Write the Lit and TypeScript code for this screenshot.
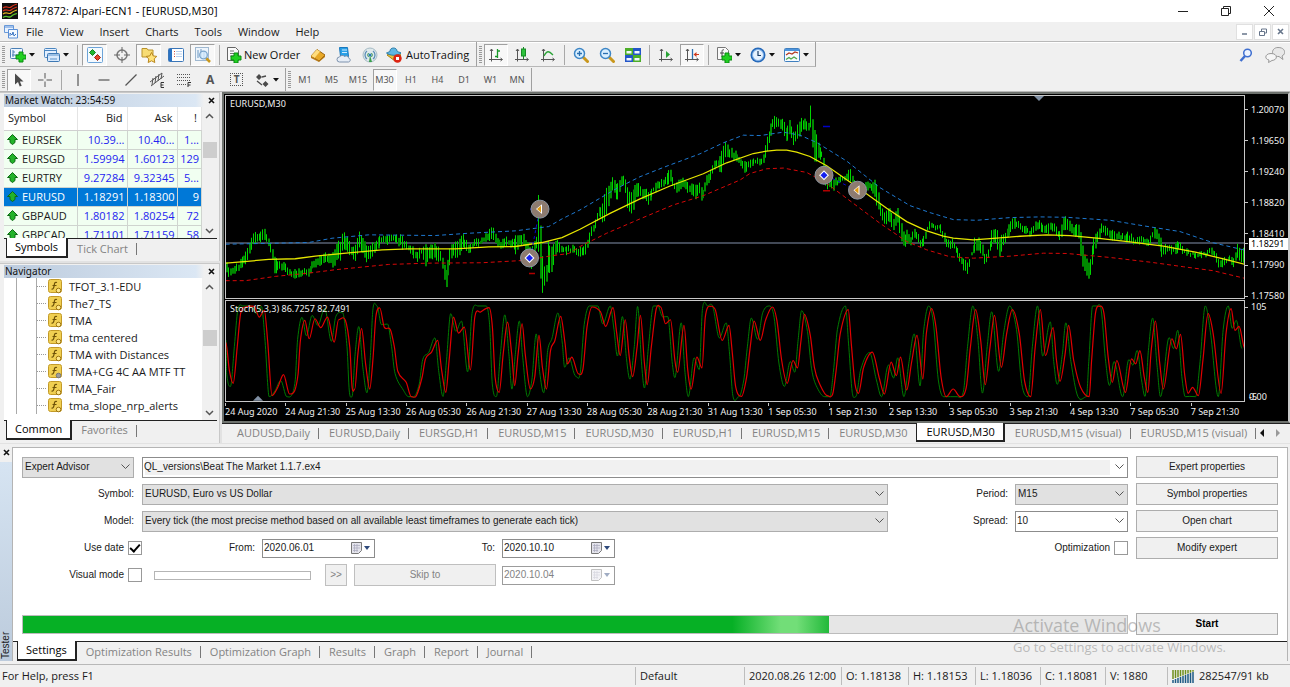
import { LitElement, html, svg, css, nothing } from "lit";
import { customElement } from "lit/decorators.js";
import { classMap } from "lit/directives/class-map.js";
import { styleMap } from "lit/directives/style-map.js";

type Pt = [number, number];
type Range = [number, number, number];

const shared = css`
  :host {
    --face: #f0f0f0;
    --ui: "Open Sans", "Noto Sans", sans-serif;
    --dialog: "Liberation Sans", Arial, sans-serif;
    --small: "Noto Sans", "Open Sans", sans-serif;
    font-family: var(--ui);
    font-size: 11px;
    line-height: 16px;
    color: #1a1a1a;
  }
  * { box-sizing: border-box; }
  button, input, select { font: inherit; color: inherit; margin: 0; border-radius: 0; }
  button { padding: 0; background: none; border: 0; white-space: nowrap; }
  svg { display: block; flex: none; }
`;

const tabStyles = css`
  .tabs { display: flex; align-items: stretch; flex: none; height: 20px; padding-left: 2px; background: var(--face); border-top: 1px solid #222; }
  .tab { display: flex; align-items: center; padding: 0 9px; color: #838383; position: relative; white-space: nowrap; }
  .tab:not(.on)::after { content: ""; position: absolute; right: 0; top: 4px; bottom: 3px; width: 1px; background: #777; }
  .tab.on { color: #000; background: #fff; border: solid #222; border-width: 0 2px 2px 1px; margin-top: -1px; padding: 0 8px; }
  .tab.before::after { display: none; }
`;

/* ---------- icons ---------- */

const plus = (x: number, y: number) => svg`<path d="M${x + 3} ${y}h4v3h3v4h-3v3h-4v-3h-3v-4h3z" fill="#21d021" stroke="#0b8a12" stroke-width="1"/>`;
const axes = svg`<path d="M3.500 2v12.500M1 12.500h13M2 4l1.500-2L5 4M12.500 11l2 1.500-2 1.500" fill="none" stroke="#555"/>`;
const lens = svg`<path d="M10 10l4.500 4.500" stroke="#c9971c" stroke-width="3" stroke-linecap="round"/><circle cx="6.500" cy="6.500" r="5" fill="#d9efff" stroke="#3d86c6" stroke-width="1.500"/>`;

const icons: Record<string, unknown> = {
  newChart: svg`<rect x=".5" y="1.500" width="12" height="10" rx="1" fill="#eef6ff" stroke="#4a7fb5"/><path d="M3 3v7M2 8h8M3 5h2" stroke="#4a7fb5" fill="none"/>${plus(6, 5)}`,
  profiles: svg`<rect x=".5" y="1.500" width="12" height="9" rx="1" fill="#e4f0ff" stroke="#4b86c0"/><path d="M1 3.500h11" stroke="#4b86c0"/><rect x="3.500" y="6.500" width="12" height="8" rx="1" fill="#d8e9fc" stroke="#3d78b4"/><path d="M4 8h11M6 12h7" stroke="#5b93cb"/>`,
  market: svg`<rect x=".5" y=".5" width="15" height="15" rx="1" fill="#f4faff" stroke="#6da4d8"/><path d="M5.500 2.500l3 3-3 3-3-3z" fill="#22b832" stroke="#168021"/><path d="M10.500 7.500l3 3-3 3-3-3z" fill="#e4452b" stroke="#9e2010"/>`,
  target: svg`<circle cx="8" cy="8" r="5" fill="none" stroke="#777" stroke-width="1.500"/><path d="M8 0v6M8 10v6M0 8h6M10 8h6" stroke="#666"/>`,
  navigator: svg`<path d="M1 3V1.500h5L7 3h5v7H1z" fill="#f7dc74" stroke="#b8912a"/><path d="M10.500 5.500l1.700 3.400 3.600.5-2.600 2.500.6 3.600-3.300-1.700L7.200 15.500l.6-3.600-2.600-2.500 3.600-.5z" fill="#ffe27a" stroke="#b8861c"/>`,
  terminal: svg`<rect x=".5" y="1.500" width="15" height="13" rx="1" fill="#fff" stroke="#3a76b8"/><rect x="1" y="2" width="3" height="12" fill="#2a72c4"/><path d="M6 4.500h1M6 7h1M6 9.500h1" stroke="#c43"/><path d="M8 4.500h6M8 7h6M8 9.500h6" stroke="#b8d0ee"/>`,
  tester: svg`<rect x=".5" y=".5" width="13" height="13" fill="#eef5fc" stroke="#9fb8d0"/><path d="M3 3v8M6 2v8M9 4v7" stroke="#6b97c2"/><path d="M11 11l4 4" stroke="#c9971c" stroke-width="2.500"/><circle cx="8.500" cy="8" r="3.800" fill="#d6ebfc" fill-opacity=".8" stroke="#7ba6cc" stroke-width="1.300"/>`,
  order: svg`<path d="M1.500 .5h8l3 3v10h-11z" fill="#fafafa" stroke="#666"/><path d="M4 4h4M4 6.500h6M4 9h4" stroke="#777"/>${plus(5, 6)}`,
  gold: svg`<path d="M1 9l6-6.500 8 5.500-6 6z" fill="#e8a927" stroke="#9a6410"/><path d="M1 9l6-6.500 3 2L4.500 11z" fill="#ffdd7d"/><path d="M1 9l8 5 6-6v2l-6 5-8-4z" fill="#b87a14"/>`,
  cloud: svg`<path d="M3.500 .5h8l1 9h-8z" fill="#28a0e8" stroke="#1978bd"/><path d="M6 3h5M6 5.500h5" stroke="#cdeaff"/><path d="M3.500 15a2.500 2.500 0 010-5c1-2 4-2 5-.5 2-1.500 4 0 4 1.500 2.500.5 2 4 0 4z" fill="#e6edf6" stroke="#7c91ad"/>`,
  radio: svg`<circle cx="8" cy="8" r="7" fill="#dfe9ec" stroke="#a5bac4"/><path d="M5 12a5 5 0 010-8M11 4a5 5 0 010 8" fill="none" stroke="#5d8fb8" stroke-width="1.300"/><path d="M6.500 10a3 3 0 010-4M9.500 6a3 3 0 010 4" fill="none" stroke="#3f9a55"/><path d="M8 8l-1 7h3z" fill="#39a04a"/><circle cx="8" cy="8" r="1.500" fill="#2a7ab8"/>`,
  auto: svg`<path d="M1 8c3-2 11-2 14 0l-6 6z" fill="#e9c03c" stroke="#a9820f"/><path d="M.5 6C2 5 4 5 4 4c0-4 7-4 7 0 0 1 3 1 4 2-3 3-11 3-14.500 0z" fill="#5fb6e2" stroke="#2c7ca8"/><circle cx="11.500" cy="11.500" r="4.200" fill="#dd2412"/><rect x="10" y="10" width="3" height="3" fill="#fff"/>`,
  bars: svg`${axes}<path d="M9.500 2v9M9.500 4h2.500M7 9.500h2.500" stroke="#1a9a2a" stroke-width="1.300"/>`,
  candles: svg`${axes}<path d="M9.500 0v12" stroke="#178a24"/><rect x="7.500" y="2" width="4" height="7" fill="#2dc23c" stroke="#178a24"/>`,
  line: svg`${axes}<path d="M4 9c3-6 5-5 9-1" fill="none" stroke="#2aa336" stroke-width="1.300"/>`,
  zoomIn: svg`${lens}<path d="M4 6.500h5M6.500 4v5" stroke="#2a6fb0" stroke-width="1.300"/>`,
  zoomOut: svg`${lens}<path d="M4 6.500h5" stroke="#2a6fb0" stroke-width="1.300"/>`,
  tile: svg`<path d="M0 1h8v7H0zM8 8h8v7H8z" fill="#4cae28"/><path d="M8 1h8v7H8zM0 8h8v7H0z" fill="#2356c8"/><path d="M1.500 4h5v2.500h-5zM9.500 4h5v2.500h-5zM1.500 11h5v2.500h-5zM9.500 11h5v2.500h-5z" fill="#f2f7ff"/>`,
  scroll: svg`${axes}<path d="M8 4v7l4-3.500z" fill="#2aa336"/>`,
  shift: svg`${axes}<path d="M8.500 2v10" stroke="#2a6fb0" stroke-width="1.300"/><path d="M9.500 7.500l3-2.500v2H15v1h-2.500v2z" fill="#d0391c"/>`,
  indicators: svg`<path d="M1.500 .5h8l3 3v9h-11z" fill="#fafafa" stroke="#777"/><path d="M8 3c-2-1-2 1-2 3v4M4 6h4" fill="none" stroke="#444"/>${plus(6, 6)}`,
  clock: svg`<circle cx="8" cy="8" r="7.500" fill="#2569ba"/><circle cx="8" cy="8" r="5.500" fill="#e6f2ff" stroke="#80b1e8"/><path d="M8 4v4.500h3" fill="none" stroke="#1a3c66" stroke-width="1.200"/>`,
  template: svg`<rect x=".5" y="1.500" width="15" height="13" rx="1" fill="#f6fbff" stroke="#3f7fbf"/><path d="M1 3h14" stroke="#4d94dc" stroke-width="2"/><path d="M2 8l3-2 3 1 3-2 3 1" fill="none" stroke="#b23a22" stroke-width="1.300"/><path d="M2 12.500l3-2 2 1.500 3-2 3 2" fill="none" stroke="#4fa648" stroke-width="1.300"/>`,
  cursor: svg`<path d="M4 1.500v11l3-2.500 1.700 4.500 2-.8-1.800-4.300h3.600z" fill="#4a4a4a"/>`,
  cross: svg`<path d="M8 1v5.500M8 9.500V15M1 8h5.500M9.500 8H15" stroke="#555"/>`,
  vline: svg`<path d="M8 2v12" stroke="#555" stroke-width="1.200"/>`,
  hline: svg`<path d="M2.500 8h11" stroke="#555" stroke-width="1.200"/>`,
  trend: svg`<path d="M2.500 13.500l11-11" stroke="#555" stroke-width="1.200"/>`,
  channel: svg`<path d="M1 10L13 1M2 14L15 4M4 6l-1 7M7 4l-1 7M10 2L9 9M13 1l-1 6" stroke="#555" fill="none"/><path d="M15 10.500h-3v5h3M12 13h2.500" fill="none" stroke="#333"/>`,
  fibo: svg`<path d="M1 2.500h14M1 5.500h14M1 8.500h14M1 12.500h9" stroke="#555" stroke-dasharray="1 1"/><path d="M15 10.500h-3V15M12 13h2.500" fill="none" stroke="#333"/>`,
  arrows: svg`<path d="M5 2l3 3-3 3-3-3zM11.500 9l3 3-3 3-3-3z" fill="#4a4a4a"/><path d="M8 5l4-1M3 9l5 4" stroke="#4a4a4a" stroke-width="1.300"/>`,
};

const icon = (name: string) => html`<svg width="16" height="16" viewBox="0 0 16 16" aria-hidden="true">${icons[name]}</svg>`;
const caret = html`<svg width="6" height="4" viewBox="0 0 6 4" aria-hidden="true"><path d="M0 0h6L3 3.500z" fill="#111"/></svg>`;
const closeMark = html`<svg width="7" height="7" viewBox="0 0 7 7" aria-hidden="true"><path d="M1 1l5 5M6 1L1 6" stroke="#111" stroke-width="1.600"/></svg>`;

/* ---------- chart data ---------- */

const spread = <T extends number[]>(rows: T[], x0: number, y0: number): T[] =>
  rows.map((r) => r.map((v, i) => (i === 0 ? x0 + v / 3 : y0 + v / 3)) as T);

const quotes: Range[] = [
  ...spread<Range>([[11,515,545],[22,540,555],[40,525,545],[55,505,530],[72,475,510],[88,440,470],[95,420,455],[110,425,450],[121,410,440],[130,420,445],[138,445,465],[148,470,500],[155,500,540],[175,510,535],[190,520,540],[205,540,560],[225,535,555],[245,535,550],[256,535,560],[270,510,530],[285,500,525],[300,490,515],[315,490,510],[333,480,525],[345,450,495],[352,460,510],[360,425,470],[375,440,475],[390,470,500],[400,460,512],[409,422,465],[420,440,485],[435,470,510],[450,460,490],[462,445,470],[480,435,455],[500,435,453],[520,435,450],[535,435,465],[550,450,475],[570,470,490],[585,480,505],[597,470,485],[608,465,520],[620,465,500],[640,460,500],[655,480,510],[670,540,585],[680,480,530],[690,460,490],[705,455,500],[720,432,465],[738,460,485],[750,450,470],[770,445,460],[790,430,450],[810,408,445],[820,440,460],[835,450,465],[850,440,460],[868,450,465],[880,430,485],[890,435,460],[903,432,465],[915,460,510],[926,480,535],[935,450,490],[943,440,470],[947,290,460],[952,360,550],[959,498,607],[970,540,570],[976,450,540],[988,470,540],[1000,445,490],[1010,460,480],[1030,470,485],[1050,465,480]], 222, 92),
  ...spread<Range>([[5,475,495],[15,455,490],[25,435,460],[35,405,430],[45,385,405],[55,345,375],[65,350,385],[75,300,385],[88,275,330],[97,252,290],[110,280,325],[120,265,290],[131,250,270],[140,285,350],[155,310,365],[165,270,320],[178,285,305],[190,290,325],[205,300,335],[220,285,300],[235,270,290],[250,265,285],[269,230,270],[285,280,300],[300,262,290],[315,270,290],[330,280,305],[345,275,320],[355,275,300],[365,300,330],[375,260,290],[390,240,265],[400,208,235],[412,210,225],[422,190,250],[433,148,200],[445,170,195],[460,180,200],[475,195,215],[490,210,238],[505,210,230],[520,205,218],[540,205,215],[550,180,205],[560,130,180],[568,110,145],[575,77,110],[590,80,105],[605,82,110],[620,110,150],[627,77,130],[640,125,155],[655,95,135],[665,80,115],[684,95,120],[690,44,100],[700,110,215],[712,150,195],[725,180,200],[735,220,280],[745,265,290],[760,265,290],[775,262,272],[790,252,270],[808,235,260],[820,265,285],[835,285,310],[850,275,295],[865,275,290],[882,268,305],[892,290,350],[900,340,375],[912,370,400],[925,345,385],[940,380,410],[950,348,385],[960,390,440],[970,430,470],[980,415,455],[990,435,460],[1003,410,435],[1020,445,465],[1030,430,460],[1045,393,410]], 580, 92),
  ...spread<Range>([[5,398,408],[28,398,412],[40,420,450],[50,445,465],[65,445,465],[80,465,490],[95,500,525],[113,515,547],[122,480,495],[135,440,480],[150,445,480],[163,490,517],[172,480,505],[185,415,460],[198,410,450],[207,440,497],[220,425,455],[235,405,430],[250,377,405],[262,390,408],[280,405,420],[300,415,432],[315,392,418],[330,390,415],[345,405,430],[360,400,415],[375,402,420],[387,425,447],[403,374,410],[415,390,415],[430,405,430],[448,400,440],[452,430,520],[463,500,540],[477,520,563],[487,450,505],[500,425,450],[517,396,420],[530,412,430],[540,420,440],[555,420,445],[575,430,445],[595,425,448],[615,440,455],[635,435,450],[655,445,467],[665,420,440],[677,410,435],[695,460,495],[715,460,480],[730,465,485],[745,450,475],[760,470,485],[780,480,490],[800,485,497],[820,485,495],[835,472,488],[850,475,490],[868,510,533],[880,500,515],[900,495,510],[913,500,527],[919,457,490],[930,475,515],[942,472,512]], 930, 92),
];

const middle: Pt[] = [
  ...spread<Pt>([[11,515],[140,504],[220,502],[280,494],[380,484],[480,475],[560,472],[700,472],[800,466],[880,465],[960,453],[1020,438]], 222, 92),
  ...spread<Pt>([[0,413],[90,365],[180,322],[270,283],[370,246],[440,213],[520,185],[560,178],[590,175],[620,175],[650,181],[690,194],[740,222],[830,285],[920,350],[980,390],[1040,418]], 580, 92),
  ...spread<Pt>([[0,421],[40,434],[70,440],[130,445],[200,440],[270,434],[350,430],[420,432],[500,440],[600,451],[700,464],[800,483],[880,502],[945,519]], 930, 92),
];
const upper: Pt[] = [
  ...spread<Pt>([[11,458],[260,453],[330,440],[440,430],[640,432],[740,425],[880,418],[980,405],[1020,382]], 222, 92),
  ...spread<Pt>([[0,355],[110,290],[180,255],[250,227],[360,186],[430,153],[490,130],[540,131],[610,121],[660,130],[710,152],[800,208],[900,288],[990,342]], 580, 92),
  ...spread<Pt>([[0,363],[70,384],[140,386],[240,378],[330,376],[410,377],[540,386],[660,406],[750,420],[850,454],[945,476]], 930, 92),
];
const lower: Pt[] = [
  ...spread<Pt>([[11,568],[70,568],[160,555],[260,545],[340,535],[500,519],[620,515],[780,514],[920,506],[980,494],[1040,486]], 222, 92),
  ...spread<Pt>([[0,465],[80,425],[180,382],[280,340],[370,312],[480,265],[510,245],[560,231],[610,229],[680,242],[740,275],[800,320],[900,395],[980,450],[1040,475]], 580, 92),
  ...spread<Pt>([[0,478],[60,496],[130,500],[240,494],[340,485],[410,486],[540,498],[660,512],[760,526],[850,538],[945,561]], 930, 92),
];

const signalA: Pt[] = [[11,135],[22,220],[33,258],[45,150],[55,50],[70,30],[95,28],[110,60],[125,40],[135,130],[148,295],[165,270],[182,232],[200,290],[215,280],[225,230],[232,130],[245,70],[258,125],[275,65],[292,92],[312,60],[332,135],[345,68],[365,70],[378,150],[385,270],[393,275],[402,170],[413,95],[425,200],[437,275],[447,180],[455,60],[467,33],[480,90],[498,97],[510,150],[520,222],[545,255],[560,298],[575,295],[592,240],[602,185],[620,165],[638,130],[650,220],[662,285],[672,190],[685,60],[700,108],[717,90],[735,218],[748,60],[765,45],[790,32],[800,90],[808,240],[820,285],[832,170],[845,75],[857,170],[866,265],[876,170],[888,80],[897,170],[912,275],[925,240],[938,115],[948,210],[960,275],[972,160],[985,130],[1002,58],[1015,140],[1022,200],[1035,180],[1055,230],[1068,215],[1080,90],[1095,30],[1120,45],[1135,88],[1157,32],[1168,110],[1178,175],[1193,68],[1205,180],[1215,238],[1228,150],[1238,55],[1250,200],[1258,262],[1270,150],[1285,35],[1298,30],[1312,80],[1327,68],[1340,190],[1348,225],[1367,85],[1378,220],[1388,275],[1405,180],[1420,212],[1430,60],[1445,28],[1460,40],[1480,130],[1500,85],[1510,170],[1520,270],[1537,297],[1552,240]];
const signalB: Pt[] = [[0,155],[12,72],[30,130],[45,70],[65,30],[78,70],[92,190],[108,258],[125,190],[138,212],[148,130],[158,52],[175,115],[187,210],[200,255],[225,295],[240,290],[250,220],[262,110],[285,38],[295,150],[305,260],[315,288],[330,210],[355,165],[375,240],[390,290],[410,195],[425,235],[437,180],[455,278],[470,190],[485,115],[502,245],[512,110],[527,35],[540,90],[555,240],[570,298],[590,275],[610,298],[628,270],[640,150],[655,38],[670,130],[683,262],[697,150],[710,55],[730,210],[745,110],[762,38],[782,110],[797,250],[815,298],[828,150],[843,38],[858,175],[880,92],[890,190],[900,252],[915,170],[925,85],[940,190],[960,270],[985,298],[992,190],[1003,50],[1015,28],[1028,50],[1040,180],[1052,255],[1065,190],[1090,285],[1108,185],[1120,200],[1132,160],[1145,240],[1155,285],[1165,160],[1177,72],[1190,200],[1200,275],[1225,125],[1238,155],[1250,112],[1262,230],[1272,288],[1285,270],[1302,295],[1315,190],[1330,50],[1345,110],[1368,288],[1382,110],[1397,35],[1408,100],[1420,88],[1437,155]];
const level = (v: number) => 307 + ((v - 27) * 91) / 271;
const signal: Pt[] = [
  ...signalA.map(([x, v]): Pt => [222 + x * 0.338, level(v)]),
  ...signalB.map(([x, v]): Pt => [750 + x * 0.3444, level(v)]),
];
const main: Pt[] = signal.map(([x, y], i): Pt => {
  const swing = i % 3 === 0 ? 1.25 : 1.1;
  return [Math.max(226, x - 2.8), Math.max(307, Math.min(398, 352 + (y - 352) * swing))];
});

const toPath = (pts: Pt[]) => "M" + pts.map(([x, y]) => `${x.toFixed(1)} ${y.toFixed(1)}`).join("L");

const toCurve = (pts: Pt[]) => {
  let d = `M${pts[0][0].toFixed(1)} ${pts[0][1].toFixed(1)}`;
  const slope = (i: number) => {
    const a = pts[i - 1];
    const b = pts[i];
    const c = pts[i + 1];
    if (!a || !c || (b[1] - a[1]) * (c[1] - b[1]) <= 0) return 0;
    return (c[1] - a[1]) / (c[0] - a[0] || 1);
  };
  for (let i = 1; i < pts.length; i++) {
    const [x0, y0] = pts[i - 1];
    const [x1, y1] = pts[i];
    const h = (x1 - x0) / 3;
    d += `C${(x0 + h).toFixed(1)} ${(y0 + slope(i - 1) * h).toFixed(1)} ${(x1 - h).toFixed(1)} ${(y1 - slope(i) * h).toFixed(1)} ${x1.toFixed(1)} ${y1.toFixed(1)}`;
  }
  return d;
};

const noise = (i: number) => {
  const s = Math.sin(i * 78.233) * 43758.5453;
  return s - Math.floor(s);
};

const buildBars = () => {
  let bright = "";
  let dim = "";
  let k = 0;
  for (let i = 0; i < 540; i++) {
    const x = 226.4 + i * 1.889;
    if (x > 1244.5) break;
    while (k < quotes.length - 2 && quotes[k + 1][0] < x) k++;
    const a = quotes[k];
    const b = quotes[k + 1];
    const t = Math.max(0, Math.min(1, (x - a[0]) / (b[0] - a[0])));
    const top = a[1] + (b[1] - a[1]) * t + (noise(i) - 0.6) * 4;
    const end = a[2] + (b[2] - a[2]) * t + (noise(i + 900) - 0.4) * 4;
    const seg = `M${Math.round(x) + 0.5} ${top.toFixed(1)}V${Math.max(end, top + 3).toFixed(1)}`;
    if (noise(i + 300) > 0.42) bright += seg;
    else dim += seg + `m1 0V${top.toFixed(1)}`;
  }
  return { bright, dim };
};
const bars = buildBars();

const prices: [string, number][] = [["1.20070", 110], ["1.19650", 141], ["1.19240", 172], ["1.18820", 203], ["1.18410", 234], ["1.17990", 266], ["1.17580", 297]];
const times = ["24 Aug 2020", "24 Aug 21:30", "25 Aug 13:30", "26 Aug 05:30", "26 Aug 21:30", "27 Aug 13:30", "28 Aug 05:30", "28 Aug 21:30", "31 Aug 13:30", "1 Sep 05:30", "1 Sep 21:30", "2 Sep 13:30", "3 Sep 05:30", "3 Sep 21:30", "4 Sep 13:30", "7 Sep 05:30", "7 Sep 21:30"];

@customElement("price-chart")
export class PriceChart extends LitElement {
  static styles = [shared, css`
    :host { display: grid; min-height: 0; min-width: 0; background: #000; border: 2px solid #6d716d; border-right-color: #c8c8c8; padding: 1px 0 0 1px;
      grid-template-columns: minmax(0, 1fr) 43px; grid-template-rows: minmax(0, 205fr) minmax(0, 102fr) 18px; row-gap: 1px;
      font-family: var(--small); font-size: 9px; line-height: 12px; color: #f0f0f0; }
    .pane { position: relative; border: 1px solid #c8c8c8; overflow: hidden; min-height: 0; }
    .pane svg { width: 100%; height: 100%; }
    .caption { position: absolute; left: 4px; top: 2px; white-space: nowrap; }
    .axis { position: relative; }
    .mark { position: absolute; left: 0; transform: translateY(-50%); display: flex; align-items: center; }
    .mark::before { content: ""; width: 3px; height: 1px; background: #c8c8c8; margin-right: 1px; }
    .price { padding: 0 2px; }
    .mark.now .price { background: #fff; color: #000; padding-right: 4px; }
    .overlap { position: absolute; left: 2px; bottom: -1px; }
    .times { grid-column: 1 / -1; display: grid; grid-template-columns: repeat(17, minmax(0, 1fr)); padding-right: 37px; white-space: nowrap; }
    .time::before { content: ""; display: block; width: 1px; height: 3px; background: #c8c8c8; }
  `];

  private order(x: number, y: number, buy: boolean) {
    return svg`<g transform="translate(${x} ${y})"><circle r="9" fill="#8d7b70" stroke="#8c96a3" stroke-width="1"/>
      ${buy
        ? svg`<path d="M0 -5l5 5-5 5-5-5z" fill="#fff"/><path d="M0 -3.500l3.500 3.500L0 3.500-3.500 0z" fill="#1420f0"/>`
        : svg`<path d="M2 -5v10L-4 0z" fill="#fff"/><path d="M1 -3.500v7L-3 0z" fill="#e09a10"/>`}</g>`;
  }

  render() {
    return html`
      <div class="pane">
        <svg viewBox="226 96 1018 203" preserveAspectRatio="none" role="img" aria-label="EURUSD M30 price chart">
          <path d="M226 243.500h1019" stroke="#596273" stroke-width="1.500"/>
          <g fill="none">
            <path d=${bars.dim} stroke="#008a00"/>
            <path d=${bars.bright} stroke="#00d400"/>
            <path d=${toPath(upper)} stroke="#1e78d0" stroke-dasharray="4 3"/>
            <path d=${toPath(lower)} stroke="#d80808" stroke-dasharray="4 3"/>
            <path d=${toPath(middle)} stroke="#e6e600" stroke-width="1.300"/>
          </g>
          <path d="M1034 96h10l-5 5z" fill="#8090a4"/>
          <path d="M823 126.500h7M530 209.500h6" stroke="#0000c8" stroke-width="1.500"/>
          <path d="M823 191h7M529 274h6" stroke="#b00000" stroke-width="1.500"/>
          <path d="M539 213L531 255M827 176l28 14" stroke="#0808d0" stroke-dasharray="3 3"/>
          ${this.order(540, 209.5, false)}${this.order(529.5, 258.5, true)}${this.order(824, 175.500, true)}${this.order(857.5, 190.500, false)}
        </svg>
        <span class="caption">EURUSD,M30</span>
      </div>
      <div class="axis">
        ${prices.map(([p, y]) => html`<div class="mark" style=${styleMap({ top: `${((y - 95) / 205) * 100}%` })}><span class="price">${p}</span></div>`)}
        <div class="mark now" style=${styleMap({ top: `${((244 - 95) / 205) * 100}%` })}><span class="price">1.18291</span></div>
      </div>
      <div class="pane">
        <svg viewBox="226 302 1018 100" preserveAspectRatio="none" role="img" aria-label="Stochastic oscillator">
          <path d=${toCurve(main)} fill="none" stroke="#007a00"/>
          <path d=${toCurve(signal)} fill="none" stroke="#e00000" stroke-width="1.200"/>
          <path d="M253 402h10l-5-5z" fill="#8090a4"/>
        </svg>
        <span class="caption">Stoch(5,3,3) 86.7257 82.7491</span>
      </div>
      <div class="axis"><span class="price overlap">0.00</span><span class="price overlap">-5</span><div class="mark" style=${styleMap({ top: "7%" })}><span class="price">105</span></div></div>
      <div class="times">${times.map((t) => html`<span class="time">${t}</span>`)}</div>
    `;
  }
}

/* ---------- strategy tester ---------- */

@customElement("strategy-tester")
export class StrategyTester extends LitElement {
  static styles = [shared, tabStyles, css`
    :host { display: flex; background: var(--face); border-top: 1px solid #e2e2e2; padding: 3px 2px 3px 0; position: relative; }
    .strip { width: 12px; flex: none; display: flex; flex-direction: column; gap: 5px; }
    .close { height: 10px; display: flex; align-items: center; justify-content: center; }
    .title { flex: 1; background: linear-gradient(#bccbdc, #d6e4f2); writing-mode: vertical-rl; transform: rotate(180deg); font-family: var(--dialog); font-size: 10px; line-height: 12px; padding-top: 2px; }
    .body { flex: 1; min-width: 0; background: #fff; border: solid #b4b4b4; border-width: 1px 1px 0 1px; display: flex; flex-direction: column; }
    .tabs { padding-left: 4px; }
    .form { flex: 1; padding: 8px 9px 6px; display: flex; flex-direction: column; gap: 5px; font-family: var(--dialog); font-size: 10px; line-height: 14px; }
    .row { display: grid; grid-template-columns: 112px minmax(0, 1fr) 142px; column-gap: 8px; min-height: 22px; align-items: center; }
    .span { grid-column: 1 / 3; display: flex; align-items: center; }
    .mid { display: flex; align-items: center; gap: 7px; }
    .grow { flex: 1; min-width: 0; }
    .right { text-align: right; }
    .label { width: 113px; text-align: right; }
    .select { display: grid; align-items: center; height: 21px; background: #e1e1e1; border: 1px solid #adadad; }
    .select.plain { background: #fff; border-color: #8c8c8c; }
    .select select, .select svg { grid-area: 1 / 1; }
    .select select { appearance: none; width: 100%; border: 0; background: none; padding: 0 20px 0 2px; outline: 0; }
    .select.plain select { padding-left: 1px; }
    .select svg { justify-self: end; margin-right: 3px; pointer-events: none; }
    .select.file select { background: linear-gradient(#f1f1f1, #f1f1f1) 2px 2px / calc(100% - 19px) 15px no-repeat; height: 19px; }
    .narrow { width: 113px; flex: none; }
    .push { height: 22px; background: #f0f0f0; border: 1px solid #adadad; }
    .push:disabled { color: #838383; border-color: #bfbfbf; }
    .push.step { width: 22px; }
    .push.skip { width: 142px; }
    .push.strong { font-weight: bold; color: #000; }
    .check { display: flex; align-items: center; justify-content: flex-end; gap: 4px; width: 120px; flex: none; }
    .check input { appearance: none; width: 14px; height: 14px; border: 1px solid #999; background: #fff; display: grid; place-items: center; }
    .check input:checked::before { content: ""; width: 8px; height: 4px; border: solid #000; border-width: 0 0 2px 2px; transform: rotate(-48deg); margin-bottom: 3px; }
    .fromlabel { width: 113px; text-align: right; margin-right: 7px; }
    .tolabel { width: 120px; text-align: right; margin-right: 7px; }
    .date { display: flex; align-items: center; width: 113px; height: 19px; border: 1px solid #8c8c8c; background: #fff; padding-right: 4px; gap: 2px; }
    .date input { flex: 1; min-width: 0; border: 0; outline: 0; padding: 0 1px; background: none; }
    .date.off { color: #838383; border-color: #9c9c9c; }
    .date.off svg { opacity: .45; }
    .slider { appearance: none; width: 157px; height: 9px; margin: 0 14px 0 12px; border: 1px solid #b5b5b5; background: #fff; }
    .slider::-webkit-slider-thumb { appearance: none; width: 0; height: 0; }
    .pair { display: flex; gap: 7px; margin-right: 6px; }
    .fill { flex: 1; }
    .bottom { margin-top: 22px; }
    .progress { grid-column: 1 / 3; height: 19px; background: #e6e6e6; border: 1px solid #bcbcbc; }
    .bar { height: 100%; background: linear-gradient(90deg, #06b025 0 88%, #72de78 94% 96%, #22b93a 100%); }
    .watermark { position: absolute; right: 53px; bottom: 6px; width: 224px; color: rgba(130, 130, 130, .5); font-size: 18px; line-height: 22px; pointer-events: none; white-space: nowrap; }
    .watermark small { display: block; font-size: 13px; }
  `];

  private select(id: string, text: string, cls = "", label?: string) {
    return html`<span class="select ${cls}"><select id=${id} aria-label=${label ?? nothing}><option>${text}</option></select>
      <svg width="9" height="6" viewBox="0 0 9 6" aria-hidden="true"><path d="M.5 .5l4 4 4-4" fill="none" stroke="#555"/></svg></span>`;
  }

  private date(id: string, value: string, off = false, label?: string) {
    return html`<span class=${classMap({ date: true, off })}><input id=${id} .value=${value} ?disabled=${off} aria-label=${label ?? nothing}>
      <svg width="11" height="12" viewBox="0 0 11 12" aria-hidden="true"><path d="M.5 .5h10v8l-3 3h-7z" fill="#e4e4ec" stroke="#777"/><path d="M2 3.500h7M2 6h7M2 8.500h5M3.500 2v8M6 2v8" stroke="#a8a8bc" stroke-width=".7"/></svg>
      <svg width="6" height="4" viewBox="0 0 6 4" aria-hidden="true"><path d="M0 0h6L3 4z" fill="#2f4a7c"/></svg></span>`;
  }

  render() {
    const tabs = ["Optimization Results", "Optimization Graph", "Results", "Graph", "Report", "Journal"];
    return html`
      <div class="strip"><button class="close" aria-label="Close tester">${closeMark}</button><div class="title">Tester</div></div>
      <div class="body">
        <div class="form">
          <div class="row">
            ${this.select("kind", "Expert Advisor", "", "Program type")}
            ${this.select("expert", "QL_versions\\Beat The Market 1.1.7.ex4", "plain file", "Expert")}
            <button class="push">Expert properties</button>
          </div>
          <div class="row">
            <label class="right" for="symbol">Symbol:</label>
            <div class="mid">${this.select("symbol", "EURUSD, Euro vs US Dollar", "grow")}<label class="label" for="period">Period:</label>${this.select("period", "M15", "narrow")}</div>
            <button class="push">Symbol properties</button>
          </div>
          <div class="row">
            <label class="right" for="model">Model:</label>
            <div class="mid">${this.select("model", "Every tick (the most precise method based on all available least timeframes to generate each tick)", "grow")}<label class="label" for="spread">Spread:</label>${this.select("spread", "10", "plain narrow")}</div>
            <button class="push">Open chart</button>
          </div>
          <div class="row">
            <div class="span">
              <label class="check">Use date<input type="checkbox" checked></label>
              <label class="fromlabel" for="from">From:</label>${this.date("from", "2020.06.01")}
              <label class="tolabel" for="to">To:</label>${this.date("to", "2020.10.10")}
              <span class="fill"></span>
              <label class="check">Optimization<input type="checkbox"></label>
            </div>
            <button class="push">Modify expert</button>
          </div>
          <div class="row">
            <div class="span">
              <label class="check">Visual mode<input type="checkbox"></label>
              <input class="slider" type="range" aria-label="Visual speed" disabled>
              <div class="pair"><button class="push step" disabled>&gt;&gt;</button><button class="push skip" disabled>Skip to</button></div>
              ${this.date("skip", "2020.10.04", true, "Skip date")}
            </div>
          </div>
          <div class="row bottom">
            <div class="progress" role="progressbar" aria-valuenow="73" aria-label="Test progress"><div class="bar" style=${styleMap({ width: "73%" })}></div></div>
            <button class="push strong">Start</button>
          </div>
        </div>
        <div class="tabs"><button class="tab on">Settings</button>${tabs.map((t) => html`<button class="tab">${t}</button>`)}</div>
      </div>
      <div class="watermark">Activate Windows<small>Go to Settings to activate Windows.</small></div>
    `;
  }
}

/* ---------- terminal window ---------- */

const symbols: string[][] = [
  ["EURSEK", "10.39...", "10.40...", "1..."],
  ["EURSGD", "1.59994", "1.60123", "129"],
  ["EURTRY", "9.27284", "9.32345", "5..."],
  ["EURUSD", "1.18291", "1.18300", "9"],
  ["GBPAUD", "1.80182", "1.80254", "72"],
  ["GBPCAD", "1.71101", "1.71159", "58"],
];
const scripts = ["TFOT_3.1-EDU", "The7_TS", "TMA", "tma centered", "TMA with Distances", "TMA+CG 4C AA MTF TT", "TMA_Fair", "tma_slope_nrp_alerts"];
const charts = ["AUDUSD,Daily", "EURUSD,Daily", "EURSGD,H1", "EURUSD,M15", "EURUSD,M30", "EURUSD,H1", "EURUSD,M15", "EURUSD,M30", "EURUSD,M30", "EURUSD,M15 (visual)", "EURUSD,M15 (visual)"];
const status: [string, string][] = [["profile", "Default"], ["stamp", "2020.08.26 12:00"], ["ohlc", "O: 1.18138"], ["ohlc", "H: 1.18153"], ["value", "L: 1.18036"], ["value", "C: 1.18081"], ["volume", "V: 1880"]];

@customElement("app-root")
export class AppRoot extends LitElement {
  static styles = [shared, tabStyles, css`
    :host { display: flex; flex-direction: column; height: 100vh; min-height: 560px; background: var(--face); overflow: hidden; }
    .titlebar { display: flex; align-items: center; height: 22px; flex: none; background: #fff; padding-left: 2px; gap: 4px; color: #000; }
    .apptitle { flex: 1; }
    .winbtn { width: 43px; height: 20px; display: grid; place-items: center; }
    .menubar { display: flex; align-items: center; height: 19px; flex: none; padding: 0 1px 0 4px; }
    .menus { display: flex; flex: 1; }
    .menu { padding: 0 8px; line-height: 18px; }
    .child { width: 17px; height: 16px; background: #fff; border: 1px solid #e0e0e0; display: grid; place-items: center; }
    .children { display: flex; gap: 1px; }
    .line { display: flex; justify-content: space-between; border-top: 1px solid #b8b8b8; box-shadow: inset 0 1px #fff; height: 26px; flex: none; }
    .line.one .bar, .line.one .side { padding-top: 1px; }
    .line.two { height: 25px; border-top-color: transparent; box-shadow: none; border-bottom: 1px solid #b8b8b8; }
    .bars { display: flex; }
    .bar { display: flex; align-items: center; gap: 2px; padding: 0 2px; border-right: 1px solid #a0a0a0; border-bottom: 1px solid #b8b8b8; }
    .two .bar { border-bottom: 0; }
    .grip { width: 3px; height: 18px; background: repeating-linear-gradient(#9a9a9a 0 1px, #f0f0f0 1px 2px); }
    .split { width: 1px; height: 20px; margin: 0 2px; background: #a8a8a8; }
    .tool { width: 24px; height: 22px; display: grid; place-items: center; color: #555; border: 1px solid transparent; font-family: var(--small); font-size: 9px; }
    .wide .tool { width: 25px; }
    .tool.on { border-color: #a0a0a0 #fff #fff #a0a0a0; background: #f8f8f8; }
    .drop { width: 32px; height: 22px; padding-left: 3px; display: flex; align-items: center; gap: 3px; }
    .wide { display: flex; gap: 2px; }
    .text { display: flex; align-items: center; gap: 2px; padding: 0 2px; color: #111; }
    .text.order { width: 80px; }
    .text.auto { width: 90px; gap: 4px; }
    .draw { display: flex; justify-content: space-between; width: 217px; }
    .frames { display: flex; justify-content: space-between; width: 236px; }
    .letter { font-size: 12px; font-weight: bold; }
    .boxed { border: 1px dotted #555; width: 13px; line-height: 11px; font-size: 10px; font-weight: bold; }
    .side { display: flex; align-items: center; gap: 12px; padding-right: 5px; }
    .main { flex: 1; min-height: 0; display: grid; grid-template-columns: 222px minmax(0, 1fr); }
    .left { display: grid; grid-template-rows: minmax(0, 169fr) minmax(0, 179fr); gap: 2px; min-height: 0; padding: 0 2px 0 0; background: #e2e2e2; }
    .panel { display: flex; flex-direction: column; min-height: 0; padding: 1px 2px 3px 4px; background: var(--face); border-top: 1px solid #c8c8c8; border-right: 1px solid #c8c8c8; }
    .head { display: flex; align-items: center; justify-content: space-between; height: 13px; flex: none; background: linear-gradient(90deg, #bccbdd, #dbe7f4 90%, #f0f0f0 94%); font-family: var(--small); font-size: 10px; line-height: 13px; color: #111; padding: 0 2px 0 1px; }
    .view { flex: 1; min-height: 0; display: grid; grid-template-columns: minmax(0, 1fr) 15px; background: #fff; overflow: hidden; }
    .clip { overflow: hidden; min-height: 0; }
    .quotes { width: 100%; border-collapse: collapse; table-layout: fixed; line-height: 16px; }
    .quotes th { height: 23px; font-weight: normal; text-align: right; padding: 0 4px; border-right: 1px solid #e4e4e4; border-bottom: 1px solid #d0d0d0; }
    .quotes td { height: 19px; padding: 0 2px; text-align: right; color: #2424f0; background: #f1fff1; border: 1px solid #cfd4cf; border-left: 0; overflow: hidden; white-space: nowrap; }
    .quotes th:first-child, .quotes td:first-child { text-align: left; }
    .quotes td:first-child { color: #1a1a1a; padding-left: 3px; }
    .quotes .picked td, .quotes .picked td:first-child { background: #0078d7; color: #fff; }
    .sym { width: 73px; } .num { width: 50px; }
    .pair { display: flex; align-items: center; gap: 4px; }
    .scroll { background: #f0f0f0; display: flex; flex-direction: column; align-items: center; padding: 6px 0 4px; }
    .thumb { width: 14px; height: 16px; background: #cdcdcd; }
    .gap1 { flex: 24; } .gap2 { flex: 74; } .gap3 { flex: 36; } .gap4 { flex: 58; }
    .tree { list-style: none; margin: 0; padding: 0 0 0 12px; background: linear-gradient(#aaa, #aaa) 12px 0 / 1px 100% no-repeat, linear-gradient(#aaa, #aaa) 32px 0 / 1px 100% no-repeat; }
    .leaf { display: flex; align-items: center; height: 17px; padding-left: 21px; white-space: nowrap; }
    .leaf::before { content: ""; width: 9px; border-top: 1px dotted #999; margin-right: 2px; }
    .leaf svg { margin-right: 7px; }
    .right { display: flex; flex-direction: column; min-width: 0; min-height: 0; }
    .right price-chart { flex: 1; }
    .right .tabs { padding: 0 2px 1px 5px; }
    .right .tab { padding: 0 9px 0 10px; }
    .right .tab.on { padding: 0 8px 0 9px; }
    .arrows { display: flex; align-items: center; gap: 12px; margin-left: auto; padding-right: 7px; }
    .status { display: flex; flex: none; height: 23px; border-top: 1px solid #b8b8b8; background: var(--face); align-items: center; white-space: nowrap; }
    .help { flex: 1; padding-left: 2px; }
    .cell { border-left: 1px solid #bdbdbd; padding-left: 4px; height: 18px; display: flex; align-items: center; gap: 4px; }
    .profile { width: 109px; } .stamp { width: 97px; } .ohlc { width: 67px; } .value { width: 65px; } .volume { width: 62px; } .traffic { width: 123px; }
  `];

  private tool(name: string, on = false) {
    return html`<button class=${classMap({ tool: true, on })} aria-label=${name}>${icon(name)}</button>`;
  }
  private drop(name: string) {
    return html`<button class="drop" aria-label=${name}>${icon(name)}${caret}</button>`;
  }
  private scroller(a: string, b: string) {
    return html`<div class="scroll">
      <svg width="9" height="6" viewBox="0 0 9 6" aria-hidden="true"><path d="M1 5l3.500-3.500L8 5" fill="none" stroke="#555" stroke-width="1.500"/></svg>
      <span class=${a}></span><span class="thumb"></span><span class=${b}></span>
      <svg width="9" height="6" viewBox="0 0 9 6" aria-hidden="true"><path d="M1 1l3.500 3.500L8 1" fill="none" stroke="#555" stroke-width="1.500"/></svg></div>`;
  }

  render() {
    return html`
      <header class="titlebar">
        <svg width="16" height="16" viewBox="0 0 16 16" aria-hidden="true"><rect width="16" height="16" fill="#111"/><path d="M1 5c4-3 6 1 8-1s3-2 6-3M1 8c4-3 6 1 8-1s3-2 6-3" fill="none" stroke="#d8331c" stroke-width="1.200"/><path d="M1 11c4-3 6 1 8-1s3-2 6-3" fill="none" stroke="#e2b322" stroke-width="1.200"/><path d="M1 14.500c4-3 6 1 8-1s3-2 6-3" fill="none" stroke="#58c22c" stroke-width="1.300"/></svg>
        <span class="apptitle">1447872: Alpari-ECN1 - [EURUSD,M30]</span>
        <div class="bars">
          <button class="winbtn" aria-label="Minimize"><svg width="10" height="10" viewBox="0 0 10 10"><path d="M0 5.500h10" stroke="#222"/></svg></button>
          <button class="winbtn" aria-label="Restore"><svg width="10" height="10" viewBox="0 0 10 10"><path d="M.5 2.500h7v7h-7zM2.500 2.500v-2h7v7h-2" fill="none" stroke="#222"/></svg></button>
          <button class="winbtn" aria-label="Close"><svg width="10" height="10" viewBox="0 0 10 10"><path d="M0 0l10 10M10 0L0 10" stroke="#222"/></svg></button>
        </div>
      </header>
      <nav class="menubar">
        <svg width="14" height="14" viewBox="0 0 14 14" aria-hidden="true"><path d="M.5 .5h9v7h-9z" fill="#e8f2ff" stroke="#6a9ad8"/><path d="M0 2h10" stroke="#5a8fd6"/><path d="M4.500 4.500h9v8.500h-9z" fill="#f4f9ff" stroke="#5a8fd6"/><path d="M6 11V8l2 2 1-3 1 4 2-2" fill="none" stroke="#3f78c4"/></svg>
        <div class="menus">${["File", "View", "Insert", "Charts", "Tools", "Window", "Help"].map((m) => html`<button class="menu">${m}</button>`)}</div>
        <div class="children">
          <button class="child" aria-label="Minimize chart"><svg width="7" height="7" viewBox="0 0 7 7"><path d="M1 6h5" stroke="#66758a" stroke-width="1.500"/></svg></button>
          <button class="child" aria-label="Restore chart"><svg width="8" height="8" viewBox="0 0 8 8"><path d="M.5 3.500h5v4h-5zM2.500 3V1h5v4h-2" fill="none" stroke="#66758a"/></svg></button>
          <button class="child" aria-label="Close chart"><svg width="7" height="7" viewBox="0 0 7 7"><path d="M1 1l5 5M6 1L1 6" stroke="#66758a" stroke-width="1.600"/></svg></button>
        </div>
      </nav>
      <div class="line one">
        <div class="bars">
          <div class="bar">
            <span class="grip"></span>${this.drop("newChart")}${this.drop("profiles")}<span class="split"></span>
            <div class="wide">${this.tool("market", true)}${this.tool("target")}${this.tool("navigator", true)}${this.tool("terminal")}${this.tool("tester", true)}</div>
            <span class="split"></span>
            <button class="text order">${icon("order")}New Order</button>
            ${this.tool("gold")}${this.tool("cloud")}${this.tool("radio")}
            <button class="text auto">${icon("auto")}AutoTrading</button>
          </div>
          <div class="bar">
            <span class="grip"></span>${this.tool("bars", true)}${this.tool("candles")}${this.tool("line")}<span class="split"></span>
            ${this.tool("zoomIn")}${this.tool("zoomOut")}${this.tool("tile")}<span class="split"></span>
            ${this.tool("scroll")}${this.tool("shift", true)}<span class="split"></span>
            ${this.drop("indicators")}${this.drop("clock")}${this.drop("template")}
          </div>
        </div>
        <div class="side">
          <svg width="14" height="14" viewBox="0 0 14 14" aria-hidden="true"><path d="M6 8l-4.500 5" stroke="#3f6fd0" stroke-width="2.500"/><circle cx="8.500" cy="5" r="3.800" fill="#eef4ff" stroke="#3f6fd0" stroke-width="1.500"/></svg>
          <svg width="20" height="16" viewBox="0 0 20 16" aria-hidden="true"><path d="M13 .5c8 0 8 7 4 8.500l1 3.500-4-3c-9 .5-8-9-1-9z" fill="#e8e8e8" stroke="#999"/><path d="M6 6.500c7 0 7 6.500 1 7L3.500 15.500l.5-2.500C-1 12 0 6.500 6 6.500z" fill="#f6f6f6" stroke="#999"/></svg>
        </div>
      </div>
      <div class="line two">
        <div class="bars">
          <div class="bar">
            <span class="grip"></span>${this.tool("cursor", true)}${this.tool("cross")}<span class="split"></span>
            <div class="draw">
              ${["vline", "hline", "trend", "channel", "fibo"].map((n) => this.tool(n))}
              <button class="tool letter" aria-label="Text">A</button>
              <button class="tool" aria-label="Text label"><span class="boxed">T</span></button>
              ${this.drop("arrows")}
            </div>
          </div>
          <div class="bar">
            <span class="grip"></span>
            <div class="frames">${["M1", "M5", "M15", "M30", "H1", "H4", "D1", "W1", "MN"].map((p) => html`<button class=${classMap({ tool: true, on: p === "M30" })}>${p}</button>`)}</div>
          </div>
        </div>
      </div>
      <main class="main">
        <aside class="left">
          <section class="panel">
            <div class="head">Market Watch: 23:54:59<button aria-label="Close Market Watch">${closeMark}</button></div>
            <div class="view">
              <div class="clip">
                <table class="quotes">
                  <thead><tr><th class="sym">Symbol</th><th class="num">Bid</th><th class="num">Ask</th><th>!</th></tr></thead>
                  <tbody>${symbols.map(([s, ...rest]) => html`<tr class=${classMap({ picked: s === "EURUSD" })}>
                    <td><span class="pair"><svg width="11" height="11" viewBox="0 0 11 11" aria-hidden="true"><path d="M5.500 .5l5 5h-2.500v3l-2.500 2-2.500-2v-3H.5z" fill="#23b32a" stroke="#0d6b14"/></svg>${s}</span></td>
                    ${rest.map((v) => html`<td>${v}</td>`)}</tr>`)}</tbody>
                </table>
              </div>
              ${this.scroller("gap1", "gap2")}
            </div>
            <div class="tabs"><button class="tab on">Symbols</button><button class="tab">Tick Chart</button></div>
          </section>
          <section class="panel">
            <div class="head">Navigator<button aria-label="Close Navigator">${closeMark}</button></div>
            <div class="view">
              <div class="clip">
                <ul class="tree">${scripts.map((s, i) => html`<li class="leaf">
                  <svg width="14" height="15" viewBox="0 0 14 15" aria-hidden="true"><rect x=".5" y=".5" width="13" height="13" rx="2" fill="#f0cf52" stroke="#c39a28"/><path d="M9 3.500c-3-1-2.500 2-3 4s-1 3-2.500 2.500M4.500 6.500h4" fill="none" stroke="#6e5208" stroke-width="1.200"/><circle cx="10.500" cy="11.500" r="2.300" fill=${i === 5 ? "#9c9c9c" : "#ffe98e"} stroke=${i === 5 ? "#777" : "#9c7410"}/></svg>${s}</li>`)}</ul>
              </div>
              ${this.scroller("gap3", "gap4")}
            </div>
            <div class="tabs"><button class="tab on">Common</button><button class="tab">Favorites</button></div>
          </section>
        </aside>
        <section class="right">
          <price-chart></price-chart>
          <div class="tabs">
            ${charts.map((c, i) => html`<button class=${classMap({ tab: true, on: i === 8, before: i === 7 })}>${c}</button>`)}
            <div class="arrows"><svg width="5" height="8" viewBox="0 0 5 8" aria-hidden="true"><path d="M5 0v8L1 4z" fill="#111"/></svg><svg width="5" height="8" viewBox="0 0 5 8" aria-hidden="true"><path d="M0 0v8l4-4z" fill="#999"/></svg></div>
          </div>
        </section>
      </main>
      <strategy-tester></strategy-tester>
      <footer class="status">
        <span class="help">For Help, press F1</span>
        ${status.map(([c, t]) => html`<span class="cell ${c}">${t}</span>`)}
        <span class="cell traffic"><svg width="23" height="13" viewBox="0 0 23 13" aria-hidden="true">
          ${Array.from({ length: 9 }, (_, i) => svg`<path d="M${i * 2.5 + 1} 0v${9 - i * 0.9}" stroke="#6f8f1c" stroke-width="1.500"/><path d="M${i * 2.5 + 1} 13v${-3 - i}" stroke="#1c5a84" stroke-width="1.500"/>`)}
        </svg>282547/91 kb</span>
      </footer>
    `;
  }
}
